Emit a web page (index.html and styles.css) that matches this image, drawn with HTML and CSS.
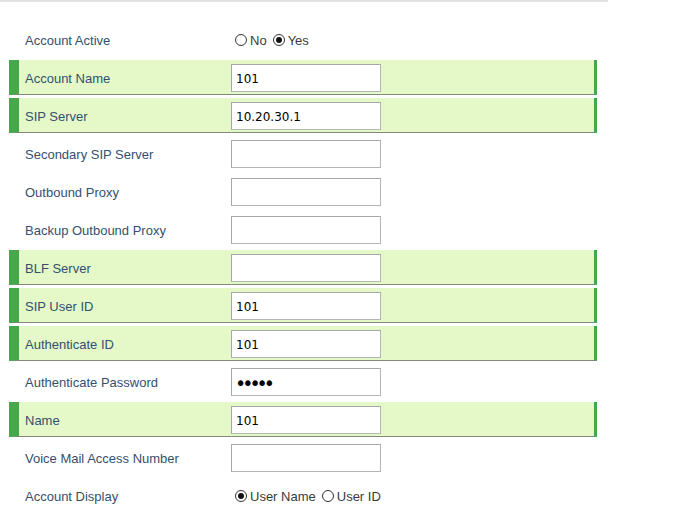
FILE: index.html
```html
<!DOCTYPE html>
<html>
<head>
<meta charset="utf-8">
<link rel="stylesheet" href="styles.css">
</head>
<body>
<div class="topline"></div>
<div class="form">
  <div class="row"><div class="inner"><div class="label">Account Active</div><div class="value"><span class="radios"><span class="radio"></span><span class="opt">No</span><span class="radio on"></span><span class="opt">Yes</span></span></div></div></div>
  <div class="row hl"><div class="inner"><div class="label">Account Name</div><div class="value"><input class="field" type="text" value="101"></div></div></div>
  <div class="row hl"><div class="inner"><div class="label">SIP Server</div><div class="value"><input class="field" type="text" value="10.20.30.1"></div></div></div>
  <div class="row"><div class="inner"><div class="label">Secondary SIP Server</div><div class="value"><input class="field" type="text" value=""></div></div></div>
  <div class="row"><div class="inner"><div class="label">Outbound Proxy</div><div class="value"><input class="field" type="text" value=""></div></div></div>
  <div class="row"><div class="inner"><div class="label">Backup Outbound Proxy</div><div class="value"><input class="field" type="text" value=""></div></div></div>
  <div class="row hl"><div class="inner"><div class="label">BLF Server</div><div class="value"><input class="field" type="text" value=""></div></div></div>
  <div class="row hl"><div class="inner"><div class="label">SIP User ID</div><div class="value"><input class="field" type="text" value="101"></div></div></div>
  <div class="row hl"><div class="inner"><div class="label">Authenticate ID</div><div class="value"><input class="field" type="text" value="101"></div></div></div>
  <div class="row"><div class="inner"><div class="label">Authenticate Password</div><div class="value"><input class="field pw" type="password" value="12345"></div></div></div>
  <div class="row hl"><div class="inner"><div class="label">Name</div><div class="value"><input class="field" type="text" value="101"></div></div></div>
  <div class="row"><div class="inner"><div class="label">Voice Mail Access Number</div><div class="value"><input class="field" type="text" value=""></div></div></div>
  <div class="row"><div class="inner"><div class="label">Account Display</div><div class="value"><span class="radios"><span class="radio on"></span><span class="opt">User Name</span><span class="radio"></span><span class="opt">User ID</span></span></div></div></div>
</div>
</body>
</html>
```
FILE: styles.css
```css
html, body {
  margin: 0;
  padding: 0;
  background: #ffffff;
}
body {
  font-family: "Liberation Sans", Arial, sans-serif;
  font-size: 13px;
  overflow: hidden;
}
.topline {
  width: 608px;
  height: 2px;
  background: #e2e2e2;
}
.form {
  margin-top: 20px;
  padding-left: 9px;
  width: 588px;
}
.row {
  height: 38px;
}
.inner {
  height: 34px;
  display: flex;
  align-items: center;
  border-left: 10px solid transparent;
  border-right: 3px solid transparent;
  border-bottom: 1px solid transparent;
}
.row.hl .inner {
  background: #e5f8c8;
  border-left-color: #45a84a;
  border-right-color: #45a84a;
  border-bottom-color: #85897c;
}
.label {
  width: 206px;
  padding-left: 6px;
  padding-top: 2px;
  color: #34506e;
  flex: none;
}
.value {
  display: flex;
  align-items: center;
}
.field {
  box-sizing: border-box;
  width: 150px;
  height: 28px;
  margin: 1px 0 0 0;
  padding: 2px 4px 0 4px;
  border: 1px solid #b4b4b4;
  border-top-color: #a8a8a8;
  border-left-color: #a8a8a8;
  background: #ffffff;
  font-family: "DejaVu Sans", Verdana, sans-serif;
  font-size: 12px;
  color: #000000;
  outline: none;
}
.field.pw {
  padding-left: 3px;
  font-size: 19px;
  letter-spacing: -4px;
}
.radios {
  display: flex;
  align-items: center;
  padding-left: 4px;
  padding-top: 2px;
  color: #3a3a3a;
  white-space: pre;
}
.radio {
  box-sizing: border-box;
  width: 12px;
  height: 12px;
  border: 1px solid #333333;
  border-radius: 50%;
  margin-right: 3px;
  display: flex;
  align-items: center;
  justify-content: center;
  background: #ffffff;
}
.opt + .radio {
  margin-left: 6px;
}
.radio.on::after {
  content: "";
  width: 6px;
  height: 6px;
  border-radius: 50%;
  background: #111111;
}
```
